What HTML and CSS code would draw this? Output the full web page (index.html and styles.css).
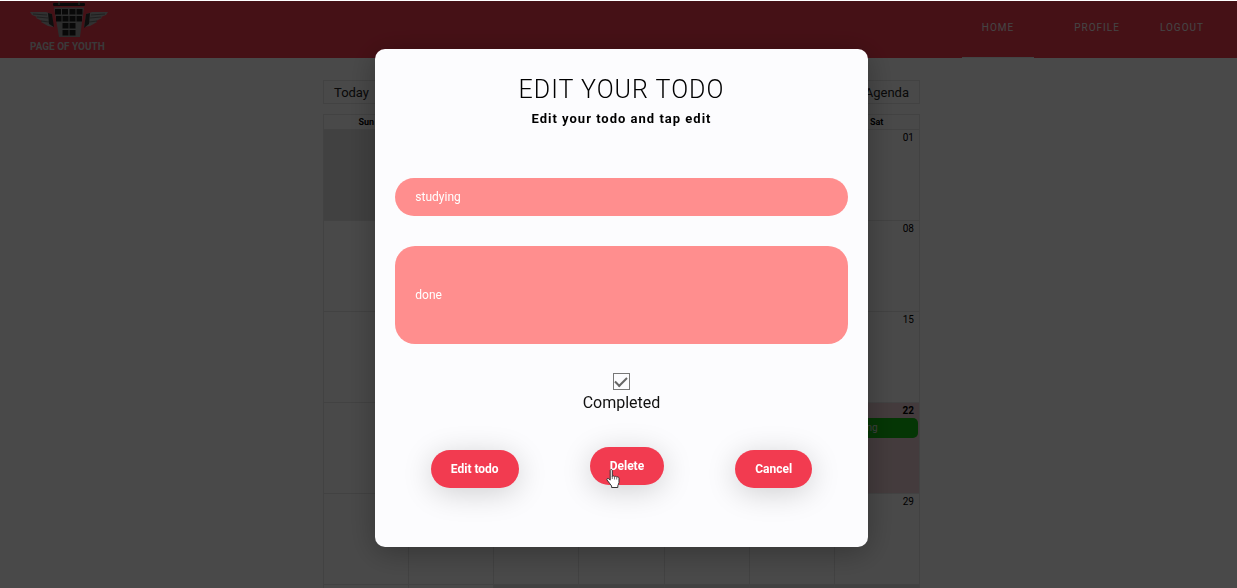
FILE: index.html
```html
<!DOCTYPE html>
<html lang="en">
<head>
<meta charset="utf-8">
<title>Page of Youth</title>
<link rel="stylesheet" href="styles.css">
</head>
<body>
<div class="page">
  <header class="header">
    <a class="logo" href="#" aria-label="Page of Youth">
      <svg width="80" height="40" viewBox="0 0 80 40" aria-hidden="true">
        <rect x="23" y="2" width="32" height="3" rx="1" fill="#222"/>
        <path d="M29 0v4M49 0v4" stroke="#8a9a88" stroke-width="1"/>
        <path d="M24 6.500h30l-4 29.500H29z" fill="#999"/>
        <g fill="#1c1c1c">
          <path d="M25 8h6v5.500h-6zM32 8h6v5.500h-6zM39.500 8h6v5.500h-6zM46.500 8h6v5.500h-6z"/>
          <path d="M26 15h5.500v5.500H26zM32.500 15h6v5.500h-6zM39.500 15h6v5.500h-6zM46.500 15h5.500v5.500h-5.500z"/>
          <path d="M32.500 22h6v5.500h-6zM39.500 22h6v5.500h-6zM32.500 29h6v5.500h-6zM39.500 29h6v5.500h-6z"/>
        </g>
        <path d="M0 11h16l6 2 1 13-5-1-7-4 1-1-6-3 1-1-5-2z" fill="#aaa"/>
        <path d="M3 13l14 1M7 16l11 1M11 20l8 1" stroke="#555" stroke-width=".7"/>
        <path d="M18 12l4 1 2 13-5-3z" fill="#333"/>
        <path d="M78 11H62l-6 2-2 13 6-1 7-4-1-1 6-3-1-1 5-2z" fill="#aaa"/>
        <path d="M75 13l-14 1M71 16l-11 1M67 20l-8 1" stroke="#555" stroke-width=".7"/>
        <path d="M60 12l-4 1-2 14 5-4z" fill="#333"/>
      </svg>
      <span class="logo-name">PAGE OF YOUTH</span>
    </a>
    <nav class="nav">
      <a class="nav-link nav-active" href="#">HOME</a>
      <a class="nav-link" href="#">PROFILE</a>
      <a class="nav-link" href="#">LOGOUT</a>
    </nav>
  </header>
  <main class="calendar">
    <div class="toolbar">
      <button class="tool" type="button">Today</button>
      <button class="tool" type="button">Agenda</button>
    </div>
    <table class="month">
      <thead><tr><th>Sun</th><th></th><th></th><th></th><th></th><th></th><th>Sat</th></tr></thead>
      <tbody>
        <tr><td class="off"></td><td class="off"></td><td class="off"></td><td class="off"></td><td class="off"></td><td class="off"></td><td>01</td></tr>
        <tr><td></td><td></td><td></td><td></td><td></td><td></td><td>08</td></tr>
        <tr><td></td><td></td><td></td><td></td><td></td><td></td><td>15</td></tr>
        <tr><td></td><td></td><td></td><td></td><td></td><td></td><td class="today">22<div class="event">studying</div></td></tr>
        <tr><td></td><td></td><td></td><td></td><td></td><td></td><td>29</td></tr>
        <tr><td></td><td></td><td class="off"></td><td class="off"></td><td class="off"></td><td class="off"></td><td class="off"></td></tr>
      </tbody>
    </table>
  </main>
</div>
<div class="overlay">
  <form class="modal" role="dialog" aria-labelledby="title">
    <h1 class="title" id="title">EDIT YOUR TODO</h1>
    <p class="subtitle">Edit your todo and tap edit</p>
    <input class="field" type="text" value="studying" aria-label="Todo title">
    <input class="field field-tall" type="text" value="done" aria-label="Todo description">
    <label class="completed">
      <input class="check" type="checkbox" checked>
      Completed
    </label>
    <div class="actions">
      <button class="action" type="button">Edit todo</button>
      <button class="action action-hover" type="button">Delete
        <svg class="pointer" width="16" height="20" viewBox="0 0 16 20" aria-hidden="true"><path d="M4.200 1.500c0-1.300 2.100-1.300 2.100 0v6c.2-.9 2-.8 2.200.3.400-.8 2-.6 2.200.4.600-.6 2.300-.3 2.300 1v4.300c0 1.200-1 2-1.200 3.300v1.700H5.600v-1.500C4.500 15.300 2.500 13 1 11c-.7-1.300.8-2 1.800-1.200l1.400 1.300z" fill="#fff" stroke="#333" stroke-width="1"/><path d="M6.300 7v3M8.500 8v2.500M10.700 8.500v2" stroke="#555" stroke-width=".8"/></svg>
      </button>
      <button class="action" type="button">Cancel</button>
    </div>
  </form>
</div>
</body>
</html>
```
FILE: styles.css
```css
* { box-sizing: border-box; }
body {
  margin: 0;
  font-family: Roboto, "Liberation Sans", sans-serif;
  color: #000;
  background: #fff;
}
.page {
  height: 100vh;
  overflow: hidden;
  padding-top: 1px;
}
.header {
  display: flex;
  justify-content: space-between;
  height: 57px;
  padding: 0 13px 0 30px;
  background: #f23b4e;
}
.logo {
  display: flex;
  flex-direction: column;
  color: #ccc;
  text-decoration: none;
}
.logo-name {
  font-size: 10px;
  line-height: 12px;
  font-weight: 700;
  white-space: nowrap;
}
.nav { display: flex; }
.nav-link {
  padding: 0 20px;
  font-size: 10px;
  line-height: 54px;
  letter-spacing: 1px;
  color: #eee;
  text-decoration: none;
}
.nav-active {
  margin-right: 20px;
  border-bottom: 1px solid #eee;
}
.calendar {
  width: 597px;
  max-width: 100%;
  margin: 22px auto 0;
  position: relative;
  left: 3px;
}
.toolbar {
  display: flex;
  justify-content: space-between;
  margin-bottom: 10px;
}
.tool {
  height: 24px;
  padding: 0 10px;
  border: 1px solid #e6e6e6;
  background: none;
  font: 13px Roboto, sans-serif;
  color: #222;
}
.month {
  width: 100%;
  table-layout: fixed;
  border-collapse: collapse;
}
.month th {
  height: 15px;
  padding: 0;
  font-size: 9px;
  line-height: 12px;
}
.month thead { border: 1px solid #e6e6e6; }
.month td {
  height: 91px;
  padding: 2px 5px 0 0;
  border: 1px solid #e6e6e6;
  vertical-align: top;
  text-align: right;
  font-size: 10px;
  line-height: 12px;
}
.month .off { background: #e2e2e2; }
.month .today {
  background: #eccfd4;
  font-weight: 700;
}
.event {
  margin: 1px -4px 0 0;
  padding: 0 5px;
  border-radius: 5px;
  background: #12bc12;
  color: #ddd;
  font-weight: 400;
  line-height: 20px;
  text-align: left;
}
.overlay {
  position: fixed;
  inset: 1px 0 0;
  display: flex;
  align-items: flex-start;
  justify-content: center;
  padding: 48px 0 0 6px;
  background: rgba(0, 0, 0, 0.715);
}
.modal {
  display: flex;
  flex-direction: column;
  width: 40%;
  padding: 25px 20px 59px;
  border-radius: 10px;
  background: #fcfcfe;
  box-shadow: 0 5px 30px rgba(0, 0, 0, 0.3);
}
.title {
  margin: 0;
  font-size: 25px;
  line-height: 32px;
  font-weight: 300;
  letter-spacing: 1px;
  text-align: center;
}
.subtitle {
  margin: 5px 0 51px;
  font-size: 13px;
  line-height: 16px;
  font-weight: 700;
  letter-spacing: 1px;
  text-align: center;
}
.field {
  width: 100%;
  height: 38px;
  margin-bottom: 30px;
  padding: 0 20px;
  border: 0;
  border-radius: 20px;
  background: #ff8e8e;
  font: 12px Roboto, sans-serif;
  color: #fff;
}
.field-tall {
  height: 98px;
  margin-bottom: 29px;
}
.completed {
  display: flex;
  flex-direction: column;
  align-items: center;
  gap: 3px;
  font-size: 16px;
  line-height: 20px;
  color: #111;
}
.check {
  appearance: none;
  width: 17px;
  height: 17px;
  margin: 0;
  border: 1px solid #777;
  background: #fcfcfe;
  display: grid;
  place-items: center;
}
.check:checked::before {
  content: "";
  width: 10px;
  height: 5px;
  border: solid #666;
  border-width: 0 0 2px 2px;
  transform: translateY(-1px) rotate(-45deg);
}
.actions {
  display: flex;
  justify-content: space-around;
  margin-top: 37px;
}
.action {
  position: relative;
  height: 38px;
  padding: 0 20px;
  border: 0;
  border-radius: 20px;
  background: #f23b50;
  box-shadow: 0 5px 30px rgba(0, 0, 0, 0.18);
  font: 700 12px Roboto, sans-serif;
  color: #fff;
}
.action-hover { transform: translateY(-3px); }
.pointer {
  position: absolute;
  left: 16px;
  top: 22px;
}
```
